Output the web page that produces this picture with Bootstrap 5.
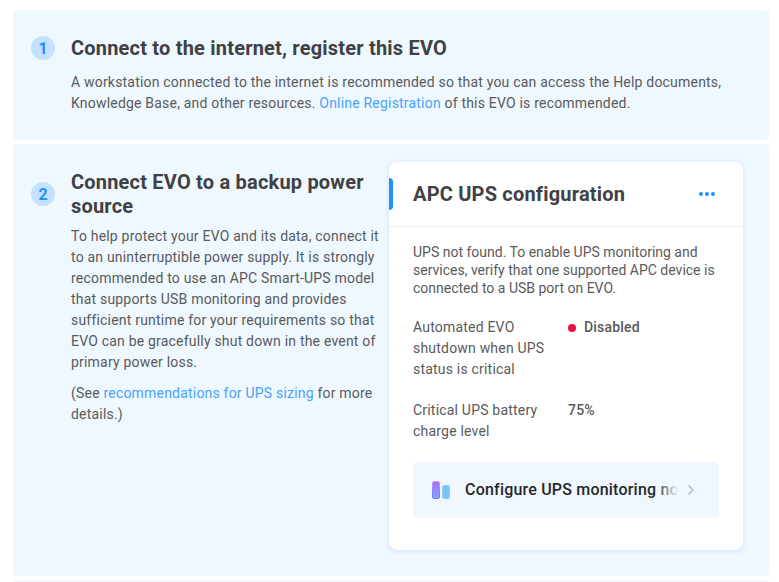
<!DOCTYPE html>
<html lang="en">
<head>
<meta charset="utf-8">
<meta name="viewport" content="width=device-width, initial-scale=1">
<title>EVO setup</title>
<link href="https://cdn.jsdelivr.net/npm/bootstrap@5.3.0/dist/css/bootstrap.min.css" rel="stylesheet">
<style>
body{font-family:Roboto,"Liberation Sans",sans-serif;font-size:14px;line-height:21px;letter-spacing:.2px;color:#5a5a5a;background:#fff}
.steps{padding:10px 10px 0 13px;gap:4px}
.step{background:#eff7ff;border-radius:4px;padding-left:18px}
.step-one{height:130px;padding-top:26px}
.step-two{height:432px;padding-top:18px}
.step-next{height:2px;border-radius:2px 2px 0 0}
.step-num{width:24px;height:24px;border-radius:50%;background:#c4e2ff;color:#1e90ff;font-size:16px;font-weight:700;line-height:25px;margin-right:16px;letter-spacing:0}
.step-two .step-num{margin-top:20px}
.step-title{font-size:20px;line-height:24px;font-weight:700;color:#404144;letter-spacing:.2px}
.step p{margin-bottom:10px}
.step a{color:#46a3ff;text-decoration:none}
.step-copy{width:318px}
.ups{width:354px;height:388px;border:0;border-radius:8px;box-shadow:0 1px 5px rgba(80,110,200,.18);color:inherit}
.ups-head{height:65px;border-bottom:1px solid #e6eff6;padding-right:28px}
.ups-accent{width:4px;height:32px;background:#1e90ff;border-radius:0 4px 4px 0;margin-right:20px}
.ups-body{padding:16px 24px 0}
.ups-body .ups-note{line-height:18px;margin-bottom:20px;letter-spacing:0}
.ups-key{width:155px;padding-right:12px}
.ups-val{font-weight:500}
.ups-dot{width:8px;height:8px;border-radius:50%;background:#e9113f;margin-right:8px}
.step .ups-action{height:56px;background:#f0f7ff;border-radius:4px;padding:0 23px 0 18px;color:#26282c;font-size:16px;font-weight:500}
.ups-label{width:213px;margin-left:14px;padding-bottom:1px}
.ups-label::after{content:"";position:absolute;top:0;right:0;bottom:0;width:23px;background:linear-gradient(90deg,rgba(240,247,255,0),#f0f7ff)}
</style>
</head>
<body>
<main class="steps d-flex flex-column">
  <section class="step step-one d-flex align-items-start flex-shrink-0">
    <span class="step-num text-center flex-shrink-0">1</span>
    <div>
      <h2 class="step-title mb-0">Connect to the internet, register this EVO</h2>
      <p class="mt-2 pt-1">A workstation connected to the internet is recommended so that you can access the Help documents,<br>Knowledge Base, and other resources. <a href="#">Online Registration</a> of this EVO is recommended.</p>
    </div>
  </section>
  <section class="step step-two d-flex align-items-start flex-shrink-0">
    <div class="d-flex align-items-start flex-shrink-0">
      <span class="step-num text-center flex-shrink-0">2</span>
      <div class="step-copy pt-2">
        <h2 class="step-title mb-0">Connect EVO to a backup power<br>source</h2>
        <p class="mt-2">To help protect your EVO and its data, connect it<br>to an uninterruptible power supply. It is strongly<br>recommended to use an APC Smart-UPS model<br>that supports USB monitoring and provides<br>sufficient runtime for your requirements so that<br>EVO can be gracefully shut down in the event of<br>primary power loss.</p>
        <p>(See <a href="#">recommendations for UPS sizing</a> for more<br>details.)</p>
      </div>
    </div>
    <div class="card ups flex-shrink-0">
      <div class="ups-head d-flex align-items-center">
        <span class="ups-accent"></span>
        <h2 class="step-title mb-0 me-auto">APC UPS configuration</h2>
        <svg width="16" height="4" viewBox="0 0 16 4" fill="#1e90ff"><circle cx="2" cy="2" r="2"/><circle cx="8" cy="2" r="2"/><circle cx="14" cy="2" r="2"/></svg>
      </div>
      <div class="ups-body">
        <p class="ups-note">UPS not found. To enable UPS monitoring and<br>services, verify that one supported APC device is<br>connected to a USB port on EVO.</p>
        <div class="d-flex mb-3 pb-1">
          <div class="ups-key">Automated EVO shutdown when UPS status is critical</div>
          <div class="ups-val d-flex align-items-center align-self-start"><span class="ups-dot"></span>Disabled</div>
        </div>
        <div class="d-flex pb-1">
          <div class="ups-key">Critical UPS battery charge level</div>
          <div class="ups-val">75%</div>
        </div>
        <a href="#" class="ups-action d-flex align-items-center mt-3">
          <svg class="flex-shrink-0" width="20" height="20" viewBox="0 0 20 20"><defs><linearGradient id="bar" x1="0" y1="0" x2="0" y2="1"><stop offset="0" stop-color="#ad6cff"/><stop offset="1" stop-color="#7ca8ff"/></linearGradient><linearGradient id="edge" x1="0" y1="0" x2="0" y2="1"><stop offset="0" stop-color="#c49aff"/><stop offset="1" stop-color="#6a78ff"/></linearGradient></defs><rect x="1.5" y="1.5" width="7" height="17" rx="1.5" fill="url(#bar)" stroke="url(#edge)"/><rect x="11.5" y="5.5" width="7" height="13" rx="1.5" fill="#80c0ff" stroke="#93ccff"/></svg>
          <span class="ups-label position-relative text-nowrap overflow-hidden">Configure UPS monitoring notifications</span>
          <svg class="ms-auto" width="10" height="12" viewBox="0 0 10 12" fill="none" stroke="#b5cbdd" stroke-width="1.9"><path d="M2.5 1.5 7 6 2.5 10.5"/></svg>
        </a>
      </div>
    </div>
  </section>
  <section class="step step-next flex-shrink-0"></section>
</main>
<script src="https://cdn.jsdelivr.net/npm/bootstrap@5.3.0/dist/js/bootstrap.bundle.min.js"></script>
</body>
</html>
